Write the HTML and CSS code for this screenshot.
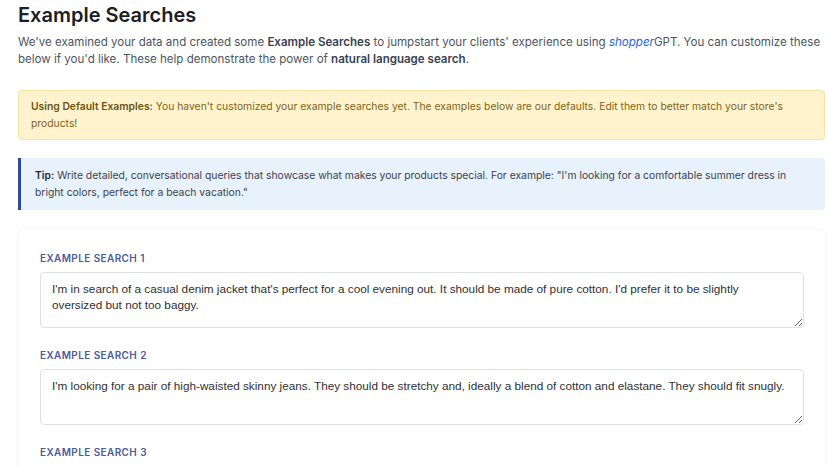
FILE: index.html
```html
<!DOCTYPE html>
<html lang="en">
<head>
<meta charset="utf-8">
<title>Example Searches</title>
<link rel="stylesheet" href="styles.css">
</head>
<body>
<main class="page">
  <h1 class="title">Example Searches</h1>
  <p class="intro">We've examined your data and created some <strong>Example Searches</strong> to jumpstart your clients' experience using <span class="brand"><em>shopper</em>GPT</span>. You can customize these below if you'd like. These help demonstrate the power of <strong>natural language search</strong>.</p>

  <div class="alert">
    <strong>Using Default Examples:</strong> You haven't customized your example searches yet. The examples below are our defaults. Edit them to better match your store's products!
  </div>

  <div class="tip">
    <strong>Tip:</strong> Write detailed, conversational queries that showcase what makes your products special. For example: "I'm looking for a comfortable summer dress in bright colors, perfect for a beach vacation."
  </div>

  <section class="card">
    <div class="field">
      <label class="label" for="s1">Example Search 1</label>
      <textarea class="input" id="s1">I'm in search of a casual denim jacket that's perfect for a cool evening out. It should be made of pure cotton. I'd prefer it to be slightly oversized but not too baggy.</textarea>
    </div>
    <div class="field">
      <label class="label" for="s2">Example Search 2</label>
      <textarea class="input" id="s2">I'm looking for a pair of high-waisted skinny jeans. They should be stretchy and, ideally a blend of cotton and elastane. They should fit snugly.</textarea>
    </div>
    <div class="field">
      <label class="label" for="s3">Example Search 3</label>
      <textarea class="input" id="s3">I need a lightweight, breathable linen shirt for summer. Something in a neutral color that I can dress up or down.</textarea>
    </div>
  </section>
</main>
</body>
</html>
```

FILE: styles.css
```css
* { box-sizing: border-box; }

html, body {
  margin: 0;
  background: #ffffff;
}

body {
  font-family: Inter, "Noto Sans", "Liberation Sans", sans-serif;
  color: #4b5563;
}

.page {
  padding: 2px 0 0 18px;
  display: flex;
  flex-direction: column;
}

.title {
  margin: 0;
  font-size: 20px;
  line-height: 26px;
  font-weight: 600;
  color: #1c1e24;
}

.intro {
  margin: 6px 0 0;
  font-size: 11.55px;
  line-height: 17px;
  color: #4b5563;
}

.intro strong {
  font-weight: 600;
  color: #374151;
}

.brand {
  color: #4b5563;
}

.brand em {
  color: #2563eb;
  font-style: italic;
}

.alert {
  margin: 22px 3px 0 0;
  padding: 7px 12px;
  background: #fff3cd;
  border: 1px solid #f6e3a4;
  border-radius: 4px;
  font-size: 10.35px;
  line-height: 17px;
  color: #7f6418;
}

.alert strong {
  font-weight: 600;
  color: #6e5410;
}

.tip {
  margin: 18px 3px 0 0;
  padding: 9px 14px;
  background: #e8f2fc;
  border-left: 3px solid #2d4a9a;
  border-radius: 0 4px 4px 0;
  font-size: 10.35px;
  line-height: 17px;
  color: #3b4250;
}

.tip strong {
  font-weight: 600;
  color: #1f2937;
}

.card {
  margin: 19px 3px 0 1px;
  padding: 22px 21px;
  background: #ffffff;
  border-radius: 8px;
  box-shadow: 0 1px 6px rgba(0, 0, 0, 0.07);
  display: flex;
  flex-direction: column;
  gap: 20px;
}

.field {
  display: flex;
  flex-direction: column;
  gap: 7px;
}

.label {
  font-size: 10px;
  line-height: 14px;
  font-weight: 600;
  letter-spacing: 0.4px;
  text-transform: uppercase;
  color: #4a5b9b;
}

.input {
  display: block;
  width: 100%;
  height: 56px;
  padding: 8px 11px;
  border: 1px solid #dfe1e5;
  border-radius: 4px;
  font-family: "Liberation Sans", Arial, sans-serif;
  font-size: 11.75px;
  line-height: 16px;
  color: #2f2f33;
  background: #ffffff;
  resize: vertical;
}
```
